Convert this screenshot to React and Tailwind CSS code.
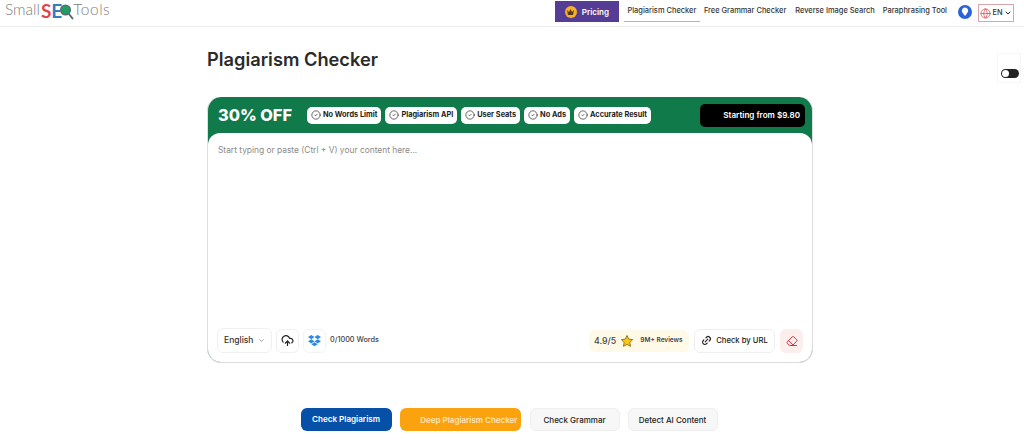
import { Link2, CloudUpload, ChevronDown, Eraser, CircleCheck, Globe } from 'lucide-react'

const font = { fontFamily: 'Inter' }

const navLinks = ['Free Grammar Checker', 'Reverse Image Search', 'Paraphrasing Tool']
const perks = ['No Words Limit', 'Plagiarism API', 'User Seats', 'No Ads', 'Accurate Result']

function Logo() {
  return (
    <div className="flex h-[20px] items-center pl-[5px] text-[15.5px] leading-none font-light text-[#808080] font-['Lato',sans-serif]">
      <span>Small</span>
      <span className="ml-px text-[19px] font-bold text-[#e0474c]">S</span>
      <span className="text-[19px] font-bold text-[#2f7fc1]">E</span>
      <svg width="15" height="20" viewBox="0 0 15 20" className="-ml-[3px] mt-[3px]">
        <circle cx="6.5" cy="8" r="4.8" fill="#1f9d63" stroke="#5a6b72" strokeWidth="1.5" />
        <path d="M10 12 13.5 16.5" stroke="#5a6b72" strokeWidth="2" strokeLinecap="round" />
      </svg>
      <span className="-ml-px tracking-[0.5px]">Tools</span>
    </div>
  )
}

function Header() {
  return (
    <header className="flex h-[27px] items-start justify-between border-b border-[#ececec] bg-white">
      <Logo />
      <nav className="flex items-start text-[7.45px] font-medium text-[#333]">
        <a className="mt-px flex h-[21px] w-[64px] items-center justify-center gap-[5px] bg-[#553c94] text-[8px] font-semibold text-white">
          <span className="flex h-[12px] w-[12px] items-center justify-center rounded-full bg-[#f6b02c]">
            <svg width="7" height="6" viewBox="0 0 7 6"><path d="M0 1 2 3 3.5 0 5 3 7 1 6 6H1Z" fill="#5a3a10" /></svg>
          </span>
          Pricing
        </a>
        <a className="ml-[5px] flex h-[22px] w-[76px] items-center justify-center border-b border-[#d9a5a8]">Plagiarism Checker</a>
        <a className="ml-[4px] flex h-[22px] items-center">{navLinks[0]}</a>
        <a className="ml-[9px] flex h-[22px] items-center">{navLinks[1]}</a>
        <a className="ml-[8px] flex h-[22px] items-center">{navLinks[2]}</a>
        <svg width="14" height="14" viewBox="0 0 14 14" className="mt-[5px] ml-[11px]">
          <circle cx="7" cy="7" r="7" fill="#2b62d9" />
          <path d="M7 2.6a3.2 3.2 0 0 1 2 5.7L7.6 10.6H6.4L5 8.3A3.2 3.2 0 0 1 7 2.6Z" fill="#fff" />
        </svg>
        <span className="mt-[4px] mr-[10px] ml-[6px] flex h-[18px] w-[36px] items-center justify-center gap-px border border-[#d9a5a8]">
          <Globe size={11} strokeWidth={1.5} className="text-[#c9454b]" />
          EN
          <ChevronDown size={8} strokeWidth={3} className="text-[#222]" />
        </span>
      </nav>
    </header>
  )
}

function Perk({ label }) {
  return (
    <span className="flex h-[17px] items-center gap-[2px] rounded-[5px] bg-white px-[4px] text-[7.35px] font-bold whitespace-nowrap text-[#222]">
      <CircleCheck size={10} strokeWidth={1.6} />
      {label}
    </span>
  )
}

function Toolbar() {
  return (
    <div className="flex items-center justify-between px-[9px] pb-[9px]">
      <div className="flex items-center gap-[4px]">
        <div className="flex h-[25px] w-[55px] items-center justify-between rounded-[6px] border border-[#f0f0f0] px-[6px] text-[8.5px] font-medium text-[#333]">
          English
          <ChevronDown size={7} strokeWidth={2} className="text-[#555]" />
        </div>
        <div className="flex h-[24px] w-[23px] items-center justify-center rounded-[6px] border border-[#f0f0f0]">
          <CloudUpload size={13} strokeWidth={2.2} className="text-[#222]" />
        </div>
        <div className="flex h-[24px] w-[23px] items-center justify-center rounded-[6px] border border-[#f0f4f8]">
          <svg width="13" height="12" viewBox="0 0 14 13" fill="#2d8ae0">
            <path d="M3.5 0 7 2.3 3.5 4.6 0 2.3ZM10.5 0 14 2.3 10.5 4.6 7 2.3ZM3.5 4.6 7 6.9 3.5 9.2 0 6.9ZM10.5 4.6 14 6.9 10.5 9.2 7 6.9ZM3.6 10 7 7.8 10.4 10 7 12.3Z" />
          </svg>
        </div>
        <span className="text-[7.3px] font-medium text-[#444]">0/1000 Words</span>
      </div>
      <div className="flex items-center gap-[5px]">
        <div className="flex h-[22px] w-[100px] items-center rounded-[6px] bg-[#fffae8] pl-[5px] text-[#444]">
          <span className="text-[8.8px] font-medium">4.9/5</span>
          <svg width="14" height="14" viewBox="0 0 24 24" className="ml-[4px]" fill="#f9c513" stroke="#8a6d10" strokeWidth="1.5">
            <path d="M12 2.5l3 6.3 6.8.9-5 4.7 1.3 6.8-6.1-3.3-6.1 3.3 1.3-6.8-5-4.7 6.8-.9z" />
          </svg>
          <span className="ml-[6px] text-[6.5px] font-semibold whitespace-nowrap">9M+ Reviews</span>
        </div>
        <div className="flex h-[24px] w-[81px] items-center justify-center gap-[4px] rounded-[6px] border border-[#eeeeee] text-[7.7px] font-medium text-[#222]">
          <Link2 size={11} strokeWidth={2.4} className="-rotate-45" />
          Check by URL
        </div>
        <div className="flex h-[24px] w-[23px] items-center justify-center rounded-[6px] bg-[#fdeeee]">
          <Eraser size={12} strokeWidth={2} className="text-[#d6333b]" />
        </div>
      </div>
    </div>
  )
}

function Card() {
  return (
    <section className="overflow-hidden rounded-[14px] border border-[#dddddd] border-t-0 bg-[#117a4b]">
      <div className="flex h-[36px] items-center pr-[7px] pl-[10px]">
        <span className="w-[89px] text-[16.3px] font-extrabold whitespace-nowrap text-white">30% OFF</span>
        <div className="flex gap-[4px]">
          {perks.map((p) => <Perk key={p} label={p} />)}
        </div>
        <span className="ml-auto flex h-[23px] w-[105px] items-center justify-end rounded-[5px] bg-black pr-[5px] text-[8.1px] font-semibold whitespace-nowrap text-white">
          Starting from $9.80
        </span>
      </div>
      <div className="flex h-[229px] flex-col justify-between rounded-t-[12px] bg-white">
        <p className="px-[10px] pt-[11px] text-[8.4px] text-[#8a8a8a]">Start typing or paste (Ctrl + V) your content here...</p>
        <Toolbar />
      </div>
    </section>
  )
}

function Actions() {
  const secondary = 'flex h-[23px] w-[90px] items-center justify-center rounded-[6px] border border-[#eeeeee] bg-[#f7f7f7] text-[8px] font-medium text-[#222]'
  return (
    <div className="mt-[45px] flex justify-center gap-[8px] pr-[2px]">
      <button className="flex h-[23px] w-[91px] items-center justify-center rounded-[6px] bg-[#0650a8] text-[8.1px] font-semibold text-white">Check Plagiarism</button>
      <button className="flex h-[23px] w-[121px] items-center justify-end rounded-[6px] bg-[#fba30e] pr-[3px] text-[8px] font-semibold text-[#ffe6b8]">Deep Plagiarism Checker</button>
      <button className={`${secondary} ml-px`}>Check Grammar</button>
      <button className={secondary}>Detect AI Content</button>
    </div>
  )
}

export default function App() {
  return (
    <div className="relative h-[440px] w-[1024px] overflow-hidden bg-white" style={font}>
      <Header />
      <main className="ml-[207px] w-[606px]">
        <h1 className="mt-[21px] mb-[26px] text-[18.25px] leading-[23px] font-semibold text-[#2b2b2b]">Plagiarism Checker</h1>
        <Card />
        <Actions />
      </main>
      {/* floating theme toggle */}
      <div className="absolute top-[53px] right-[3px] flex h-[30px] w-[24px] items-end justify-end border border-[#f6f6f6] pr-[1px] pb-[4px]">
        <span className="flex h-[9px] w-[18px] items-center rounded-full bg-[#222]">
          <span className="ml-px h-[7px] w-[7px] rounded-full bg-white" />
        </span>
      </div>
    </div>
  )
}
